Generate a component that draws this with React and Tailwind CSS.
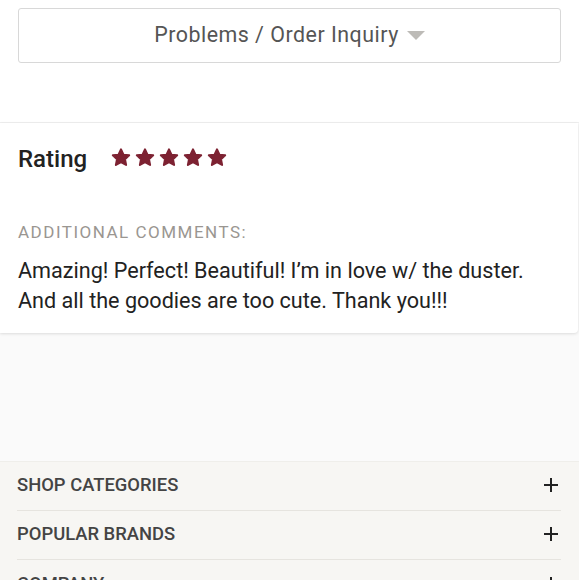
import React from 'react';

const Star = () => (
  <svg width="22" height="21" viewBox="0 0 24 24" fill="#7d2232" stroke="#7d2232" strokeWidth="2.4" strokeLinejoin="round">
    <path d="M12 2.8l2.8 6 6.5.7-4.8 4.5 1.3 6.5L12 17.3l-5.8 3.2 1.3-6.5-4.8-4.5 6.5-.7z" />
  </svg>
);

const Plus = () => (
  <svg width="16" height="16" viewBox="0 0 16 16" stroke="#222" strokeWidth="2">
    <path d="M8 1v14M1 8h14" />
  </svg>
);

const FooterRow = ({ label, last }) => (
  <div className={`flex items-center justify-between h-[49px] ${last ? '' : 'border-b border-[#e6e4df]'}`}>
    <span className="text-[18.4px] font-medium text-[#444] -mt-[2px]">{label}</span>
    <span className="mr-[2px] -mt-[2px]"><Plus /></span>
  </div>
);

export default function App() {
  return (
    <div className="w-[579px] h-[580px] overflow-hidden bg-[#fafafa] font-['Roboto',sans-serif]">
      {/* inquiry dropdown */}
      <div className="bg-white h-[123px] pt-[8px] px-[18px] border-b border-[#efefef]">
        <div className="h-[55px] border border-[#d8d8d8] rounded-[3px] flex items-center justify-center gap-[8px]">
          <span className="text-[21.4px] text-[#555] tracking-[0.5px]">Problems / Order Inquiry</span>
          <svg width="18" height="10" viewBox="0 0 18 10">
            <path d="M0 0h18L9 9z" fill="#bdbbb7" />
          </svg>
        </div>
      </div>

      {/* review card */}
      <div className="bg-white h-[210px] px-[18px] pt-[21px] rounded-br-[4px] mr-[1px] shadow-[0_1px_3px_rgba(0,0,0,0.12)]">
        <div className="flex items-center gap-[23px] h-[30px]">
          <span className="text-[24px] font-medium text-[#222]">Rating</span>
          <div className="flex gap-[2px] -mt-[3px]">
            <Star /><Star /><Star /><Star /><Star />
          </div>
        </div>
        <div className="mt-[46px] text-[17px] text-[#9a9691] tracking-[1.5px]">ADDITIONAL COMMENTS:</div>
        <p className="mt-[10px] text-[21.6px] leading-[30px] text-[#222]">
          Amazing! Perfect! Beautiful! I’m in love w/ the duster.<br />
          And all the goodies are too cute. Thank you!!!
        </p>
      </div>

      <div className="h-[128px]" />

      {/* footer */}
      <div className="bg-[#f7f6f3] border-t border-[#efeeea] pl-[17px] pr-[18px]">
        <FooterRow label="SHOP CATEGORIES" />
        <FooterRow label="POPULAR BRANDS" />
        <FooterRow label="COMPANY" last />
      </div>
    </div>
  );
}
